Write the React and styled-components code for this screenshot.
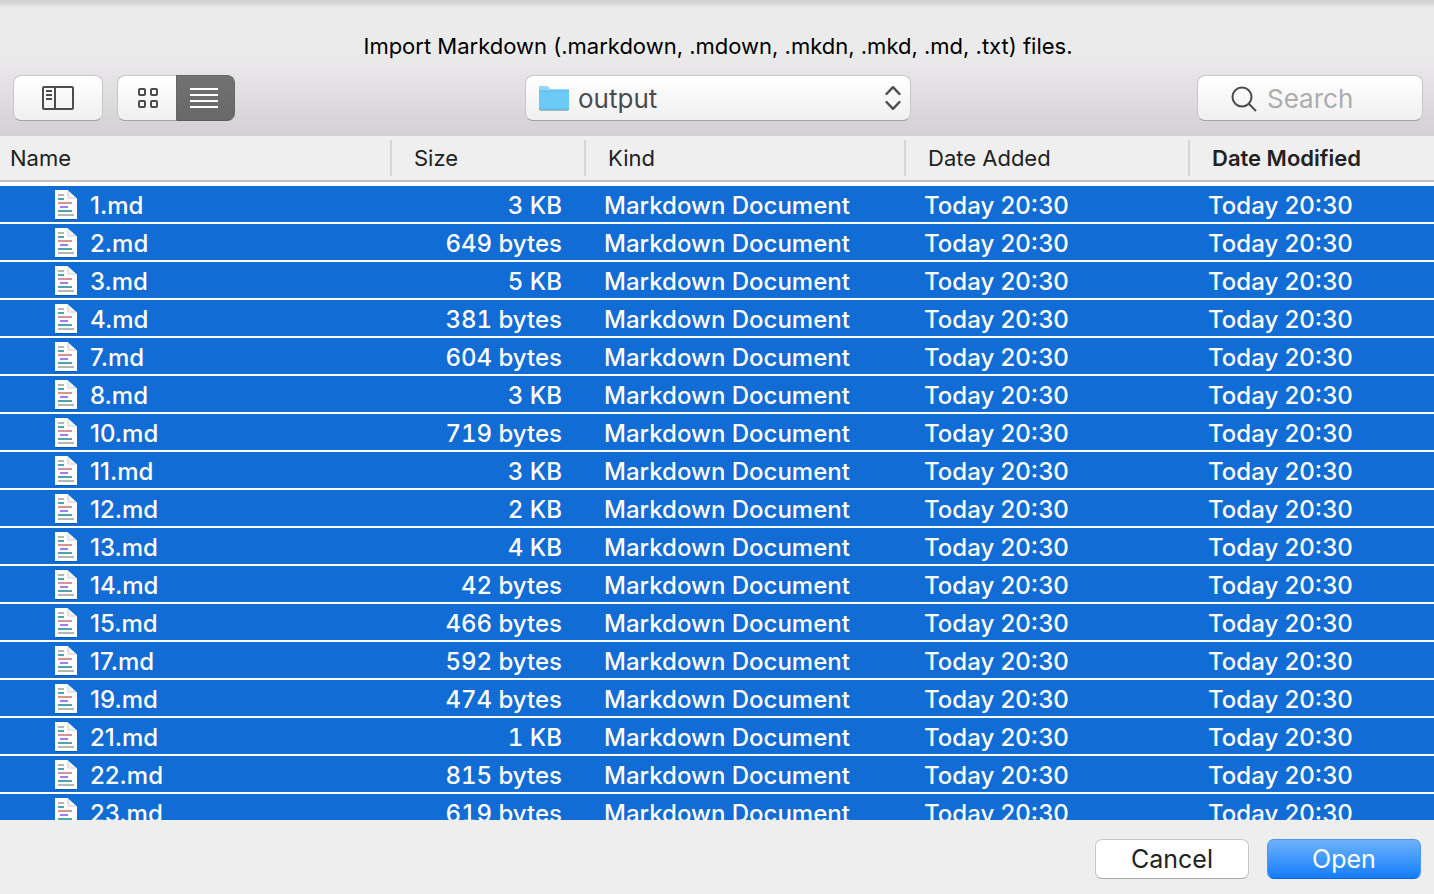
import React from 'react'
import styled, { createGlobalStyle } from 'styled-components'

const GlobalStyle = createGlobalStyle`
  * {
    box-sizing: border-box;
  }

  body {
    margin: 0;
    background: #eeeeee;
    color: #222222;
    font-family: Inter, 'Liberation Sans', sans-serif;
  }

  button,
  input,
  select {
    font-family: inherit;
  }
`

const Dialog = styled.div`
  display: flex;
  flex-direction: column;
  height: 100vh;
  overflow: hidden;
`

const Header = styled.header`
  flex: none;
  padding: 32px 11px 15px 13px;
  background:
    linear-gradient(#d0d0d0 0, #d6d6d6 3px, rgba(235, 235, 235, 0) 8px),
    linear-gradient(#ebebeb 0, #ebebeb 50px, #e9e7ea 66px, #d2d0d2 100%);
`

const Title = styled.h1`
  margin: 0 0 15px;
  color: #000000;
  font-size: 22px;
  font-weight: 400;
  line-height: 28px;
  text-align: center;
`

const Toolbar = styled.div`
  display: grid;
  grid-template-columns: 1fr 386px 1fr;
  align-items: center;
`

const ToolGroup = styled.div`
  display: flex;
  gap: 14px;
  justify-content: ${(props) => (props.$end ? 'flex-end' : 'flex-start')};
`

const Segments = styled.div`
  display: flex;
`

const ToolButton = styled.button`
  display: flex;
  align-items: center;
  justify-content: center;
  width: ${(props) => props.$width}px;
  height: 46px;
  padding: 0;
  border: 1px solid ${(props) => (props.$active ? '#666666' : '#c8c6c8')};
  border-bottom-color: ${(props) => (props.$active ? '#5c5c5c' : '#a4a2a4')};
  border-radius: ${(props) => props.$radius || '8px'};
  border-right-width: ${(props) => (props.$joined ? 0 : '1px')};
  background: ${(props) =>
    props.$active
      ? 'linear-gradient(#727272, #686868)'
      : 'linear-gradient(#ffffff, #f0f0f0)'};
`

const FolderPicker = styled.div`
  position: relative;
`

const FolderSelect = styled.select`
  display: block;
  width: 100%;
  height: 46px;
  padding: 1px 52px 0;
  appearance: none;
  border: 1px solid #c8c6c8;
  border-bottom-color: #a4a2a4;
  border-radius: 8px;
  background: linear-gradient(#ffffff, #f0f0f0);
  color: #4c4c4c;
  font-size: 26px;
`

const FolderIcon = styled.svg`
  position: absolute;
  top: 11px;
  left: 14px;
  pointer-events: none;
`

const ArrowsIcon = styled.svg`
  position: absolute;
  top: 10px;
  right: 10px;
  pointer-events: none;
`

const SearchBox = styled.label`
  display: flex;
  align-items: center;
  gap: 10px;
  width: 226px;
  height: 46px;
  padding: 1px 12px 0 33px;
  border: 1px solid #c8c6c8;
  border-bottom-color: #a4a2a4;
  border-radius: 8px;
  background: linear-gradient(#ffffff, #f0f0f0);
`

const SearchInput = styled.input`
  flex: 1;
  min-width: 0;
  padding: 0;
  border: none;
  outline: none;
  background: none;
  font-size: 26px;

  &::placeholder {
    color: #adadad;
    opacity: 1;
  }
`

const FileList = styled.main`
  flex: 1;
  min-height: 0;
  overflow: hidden;
  background: #ffffff;
`

const Table = styled.table`
  width: 100%;
  table-layout: fixed;
  border-collapse: separate;
  border-spacing: 0;
`

const Body = styled.tbody`
  &::before {
    content: '';
    display: block;
    height: 4px;
  }
`

const HeadCell = styled.th`
  width: ${(props) => (props.$width ? `${props.$width}px` : 'auto')};
  padding: 4px 0;
  border-bottom: 2px solid #bfbfbf;
  background: #efefef;
  font-size: 22px;
  font-weight: ${(props) => (props.$sorted ? 600 : 400)};
  line-height: 36px;
  text-align: left;
`

const HeadLabel = styled.div`
  height: 36px;
  padding-left: ${(props) => (props.$first ? 10 : 22)}px;
  border-right: ${(props) => (props.$last ? 'none' : '2px solid #d6d6d6')};
`

const Cell = styled.td`
  height: 38px;
  padding: 4px 24px 0 ${(props) => props.$indent || 0}px;
  border-bottom: 2px solid #ffffff;
  background: #116cd6;
  color: #ffffff;
  font-size: 24px;
  font-variant-numeric: ${(props) =>
    props.$align === 'right' ? 'tabular-nums' : 'normal'};
  font-weight: 500;
  line-height: 32px;
  text-align: ${(props) => props.$align || 'left'};
  white-space: nowrap;
`

const FileName = styled.div`
  display: flex;
  align-items: center;
  gap: 12px;
  height: 32px;
`

const Footer = styled.footer`
  display: flex;
  flex: none;
  justify-content: flex-end;
  gap: 18px;
  padding: 19px 13px 15px;
  background: #eeeeee;
`

const ActionButton = styled.button`
  width: 154px;
  height: 40px;
  padding: 0;
  border: 1px solid ${(props) => (props.$primary ? '#4a96f0' : '#c6c6c6')};
  border-bottom-color: ${(props) => (props.$primary ? '#0f62f4' : '#a8a8a8')};
  border-radius: 7px;
  background: ${(props) =>
    props.$primary ? 'linear-gradient(#6db3f9, #147dfe)' : '#ffffff'};
  color: ${(props) => (props.$primary ? '#ffffff' : '#222222')};
  font-size: 25px;
  line-height: 36px;
`

const files = [
  ['1.md', '3 KB'],
  ['2.md', '649 bytes'],
  ['3.md', '5 KB'],
  ['4.md', '381 bytes'],
  ['7.md', '604 bytes'],
  ['8.md', '3 KB'],
  ['10.md', '719 bytes'],
  ['11.md', '3 KB'],
  ['12.md', '2 KB'],
  ['13.md', '4 KB'],
  ['14.md', '42 bytes'],
  ['15.md', '466 bytes'],
  ['17.md', '592 bytes'],
  ['19.md', '474 bytes'],
  ['21.md', '1 KB'],
  ['22.md', '815 bytes'],
  ['23.md', '619 bytes'],
]

const DocumentIcon = () => (
  <svg width="24" height="32" viewBox="0 0 24 32" aria-hidden="true">
    <path d="M1 1.5h13l9 9V30H1z" fill="#0b4fa6" opacity="0.6" />
    <path d="M1 0h12.500L23 8.500V29H1z" fill="#ffffff" />
    <path d="M14 1v7h8" fill="#f4f4f4" stroke="#cfcfcf" />
    <path d="M4 5h6M4 25h16" stroke="#b5b5b5" strokeWidth="2" />
    <path d="M4 9h6M4 21h14" stroke="#4da5b3" strokeWidth="2" />
    <path d="M4 13h14" stroke="#d9929a" strokeWidth="2" />
    <path d="M6 17h8" stroke="#a37cf5" strokeWidth="2" />
  </svg>
)

const SidebarIcon = () => (
  <svg width="32" height="24" fill="none" stroke="#4c4c4c" strokeWidth="2">
    <rect x="1" y="1" width="30" height="22" rx="1" />
    <path d="M13 1v22M4 5h6M4 9h6M4 13h6" />
  </svg>
)

const GridIcon = () => (
  <svg width="22" height="22" fill="none" stroke="#4c4c4c" strokeWidth="2">
    <rect x="3" y="2" width="6" height="6" rx="1" />
    <rect x="15" y="2" width="6" height="6" rx="1" />
    <rect x="3" y="14" width="6" height="6" rx="1" />
    <rect x="15" y="14" width="6" height="6" rx="1" />
  </svg>
)

const ListIcon = () => (
  <svg width="32" height="20" stroke="#ffffff" strokeWidth="2">
    <path d="M0 1h28M0 7h28M0 13h28M0 19h28" />
  </svg>
)

const App = () => {
  const [view, setView] = React.useState('list')
  const [query, setQuery] = React.useState('')

  return (
    <Dialog>
      <GlobalStyle />
      <Header>
        <Title>
          Import Markdown (.markdown, .mdown, .mkdn, .mkd, .md, .txt) files.
        </Title>
        <Toolbar>
          <ToolGroup>
            <ToolButton type="button" $width={90} aria-label="Toggle sidebar">
              <SidebarIcon />
            </ToolButton>
            <Segments>
              <ToolButton
                type="button"
                $width={59}
                $radius="8px 0 0 8px"
                $joined
                aria-label="Icon view"
                $active={view === 'icons'}
                onClick={() => setView('icons')}
              >
                <GridIcon />
              </ToolButton>
              <ToolButton
                type="button"
                $width={59}
                $radius="0 8px 8px 0"
                aria-label="List view"
                $active={view === 'list'}
                onClick={() => setView('list')}
              >
                <ListIcon />
              </ToolButton>
            </Segments>
          </ToolGroup>
          <FolderPicker>
            <FolderSelect aria-label="Folder">
              <option>output</option>
            </FolderSelect>
            <FolderIcon width="30" height="27" viewBox="0 0 30 27">
              <path d="M0 3v20q0 2 2 2h26q2 0 2-2v-2H0z" fill="#a9b4ba" />
              <path
                d="M0 1q0-1 1-1h7q1 0 2 1.500t2 1.500h17q1 0 1 1v19q0 1-1 1H1q-1 0-1-1z"
                fill="#8fd8fa"
              />
              <path d="M0 5h30v18q0 1-1 1H1q-1 0-1-1z" fill="#6ccaf7" />
              <path d="M0 5h30M0 23h30" stroke="#58b5e2" />
            </FolderIcon>
            <ArrowsIcon
              width="16"
              height="26"
              fill="none"
              stroke="#4c4c4c"
              strokeWidth="2.400"
              strokeLinecap="round"
              strokeLinejoin="round"
            >
              <path d="M1.500 9L8 2.200l6.500 6.800M1.500 17L8 23.800l6.500-6.800" />
            </ArrowsIcon>
          </FolderPicker>
          <ToolGroup $end>
            <SearchBox>
              <svg
                width="26"
                height="26"
                fill="none"
                stroke="#4c4c4c"
                strokeWidth="2"
                aria-hidden="true"
              >
                <circle cx="11" cy="11" r="9.500" />
                <path d="M17.500 17.500l7.500 7.500" />
              </svg>
              <SearchInput
                type="text"
                aria-label="Search"
                placeholder="Search"
                value={query}
                onChange={(e) => setQuery(e.target.value)}
              />
            </SearchBox>
          </ToolGroup>
        </Toolbar>
      </Header>
      <FileList>
        <Table>
          <thead>
            <tr>
              <HeadCell $width={392}>
                <HeadLabel $first>Name</HeadLabel>
              </HeadCell>
              <HeadCell $width={194}>
                <HeadLabel>Size</HeadLabel>
              </HeadCell>
              <HeadCell $width={320}>
                <HeadLabel>Kind</HeadLabel>
              </HeadCell>
              <HeadCell $width={284}>
                <HeadLabel>Date Added</HeadLabel>
              </HeadCell>
              <HeadCell $sorted>
                <HeadLabel $last>Date Modified</HeadLabel>
              </HeadCell>
            </tr>
          </thead>
          <Body>
            {files.map(([name, size]) => (
              <tr key={name}>
                <Cell $indent={54}>
                  <FileName>
                    <DocumentIcon />
                    {name}
                  </FileName>
                </Cell>
                <Cell $align="right">{size}</Cell>
                <Cell $indent={18}>Markdown Document</Cell>
                <Cell $indent={18}>Today 20:30</Cell>
                <Cell $indent={18}>Today 20:30</Cell>
              </tr>
            ))}
          </Body>
        </Table>
      </FileList>
      <Footer>
        <ActionButton type="button">Cancel</ActionButton>
        <ActionButton type="button" $primary>
          Open
        </ActionButton>
      </Footer>
    </Dialog>
  )
}

export default App
